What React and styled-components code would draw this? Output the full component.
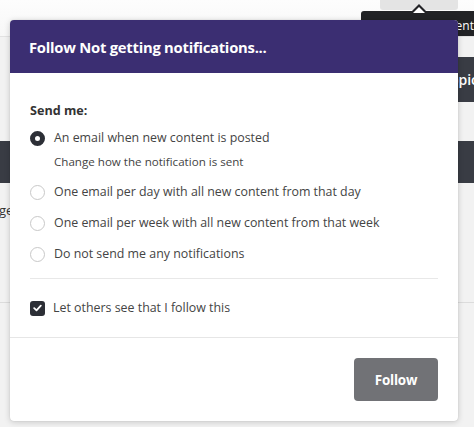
import React from "react";
import styled, { createGlobalStyle } from "styled-components";

const Global = createGlobalStyle`
  html, body { margin: 0; padding: 0; }
  body {
    width: 474px; height: 427px; overflow: hidden;
    font-family: "Open Sans", "Noto Sans", sans-serif;
    background: #f2f2f2;
  }
`;

const Page = styled.div`
  position: relative;
  width: 474px;
  height: 427px;
  overflow: hidden;
  background: #f2f2f2;
`;

const TopStrip = styled.div`
  height: 36px;
  background: linear-gradient(#fdfdfd, #f7f7f7);
  border-bottom: 1px solid #e2e2e2;
  display: flex;
  justify-content: flex-end;
  align-items: flex-start;
`;

const TopTab = styled.div`
  width: 78px;
  height: 10px;
  margin-right: 16px;
  background: #e4e4e4;
  border-radius: 0 0 3px 3px;
`;

const Tooltip = styled.div`
  position: absolute;
  left: 361px;
  top: 11px;
  width: 130px;
  height: 25px;
  background: #222326;
  border-radius: 3px;
  color: #fff;
  font-size: 12px;
  line-height: 20px;
  padding: 5px 17px 0 0;
  white-space: nowrap;
  text-align: right;
  box-sizing: border-box;
  &::before {
    content: "";
    position: absolute;
    left: 50px;
    top: -7px;
    width: 0; height: 0;
    border-left: 8px solid transparent;
    border-right: 8px solid transparent;
    border-bottom: 8px solid #222326;
  }
  &::after {
    content: "";
    position: absolute;
    left: 52px;
    top: -4px;
    border-left: 6px solid transparent;
    border-right: 6px solid transparent;
    border-bottom: 6px solid #fff;
  }
`;

const Content = styled.div`
  display: flex;
  flex-direction: column;
`;

const ButtonRow = styled.div`
  margin-top: 20px;
  height: 45px;
  display: flex;
  justify-content: flex-end;
`;

const DarkButton = styled.div`
  width: 60px;
  margin-right: -16px;
  background: #393c44;
  color: #fff;
  font-size: 14px;
  font-weight: 600;
  line-height: 45px;
  box-sizing: border-box;
  text-align: right;
  padding-right: 12px;
`;

const DarkBand = styled.div`
  margin-top: 39px;
  height: 42px;
  background: #393c44;
`;

const PageText = styled.div`
  margin-top: 17px;
  margin-left: -16px;
  font-size: 13px;
  color: #333;
  line-height: 20px;
`;

const PageRule = styled.div`
  margin-top: 82px;
  height: 1px;
  background: #dcdcdc;
`;

const Modal = styled.div`
  position: absolute;
  left: 10px;
  top: 20px;
  width: 448px;
  background: #fff;
  border-radius: 4px;
  box-shadow: 0 1px 6px rgba(0,0,0,0.18), 0 0 1px rgba(0,0,0,0.2);
  display: flex;
  flex-direction: column;
`;

const Header = styled.div`
  height: 53px;
  background: #3b2e72;
  border-radius: 4px 4px 0 0;
  display: flex;
  align-items: center;
  padding-left: 19px;
  color: #fff;
  font-size: 14.8px;
  font-weight: 700;
  letter-spacing: -0.25px;
`;

const Body = styled.div`
  padding: 28px 20px 19px;
  display: flex;
  flex-direction: column;
`;

const Label = styled.div`
  font-size: 12.6px;
  font-weight: 700;
  color: #333;
  line-height: 20px;
`;

const Option = styled.label`
  display: flex;
  align-items: center;
  gap: ${p => p.$gap || 9}px;
  margin-top: ${p => p.$mt}px;
  font-size: 12.4px;
  line-height: 20px;
  color: #444;
`;

const Radio = styled.span`
  width: 15px;
  height: 15px;
  box-sizing: border-box;
  border-radius: 50%;
  flex: none;
  background: #fff;
  border: ${p => (p.$checked ? "5px solid #2c2f36" : "1px solid #c8c8c8")};
`;

const Help = styled.div`
  margin-top: 5px;
  margin-left: 24px;
  font-size: 11.6px;
  line-height: 18px;
  color: #444;
`;

const Divider = styled.div`
  margin-top: 14px;
  height: 1px;
  background: #e8e8e8;
`;

const Check = styled.span`
  width: 15px;
  height: 15px;
  border-radius: 3px;
  background: #2c2f36;
  flex: none;
  display: flex;
  align-items: center;
  justify-content: center;
`;

const Footer = styled.div`
  border-top: 1px solid #e6e6e6;
  padding: 20px;
  display: flex;
  justify-content: flex-end;
`;

const FollowButton = styled.button`
  width: 84px;
  height: 43px;
  border: none;
  border-radius: 4px;
  background: #717276;
  color: #fff;
  font-family: inherit;
  font-size: 13.4px;
  font-weight: 700;
  letter-spacing: -0.2px;
`;

export default function App() {
  return (
    <Page>
      <Global />
      <TopStrip>
        <TopTab />
      </TopStrip>
      <Content>
        <ButtonRow>
          <DarkButton>Topic</DarkButton>
        </ButtonRow>
        <DarkBand />
        <PageText>Page</PageText>
        <PageRule />
      </Content>
      <Tooltip>Unfollow content</Tooltip>
      <Modal>
        <Header>Follow Not getting notifications...</Header>
        <Body>
          <Label>Send me:</Label>
          <Option $mt={7}>
            <Radio $checked />
            An email when new content is posted
          </Option>
          <Help>Change how the notification is sent</Help>
          <Option $mt={11}>
            <Radio />
            One email per day with all new content from that day
          </Option>
          <Option $mt={11}>
            <Radio />
            One email per week with all new content from that week
          </Option>
          <Option $mt={11}>
            <Radio />
            Do not send me any notifications
          </Option>
          <Divider />
          <Option $mt={19} $gap={8}>
            <Check>
              <svg width="9" height="8" viewBox="0 0 9 8">
                <path d="M1.2 4.2 L3.5 6.3 L7.8 1.6" fill="none" stroke="#fff" strokeWidth="1.8" strokeLinecap="round" strokeLinejoin="round" />
              </svg>
            </Check>
            Let others see that I follow this
          </Option>
        </Body>
        <Footer>
          <FollowButton>Follow</FollowButton>
        </Footer>
      </Modal>
    </Page>
  );
}
